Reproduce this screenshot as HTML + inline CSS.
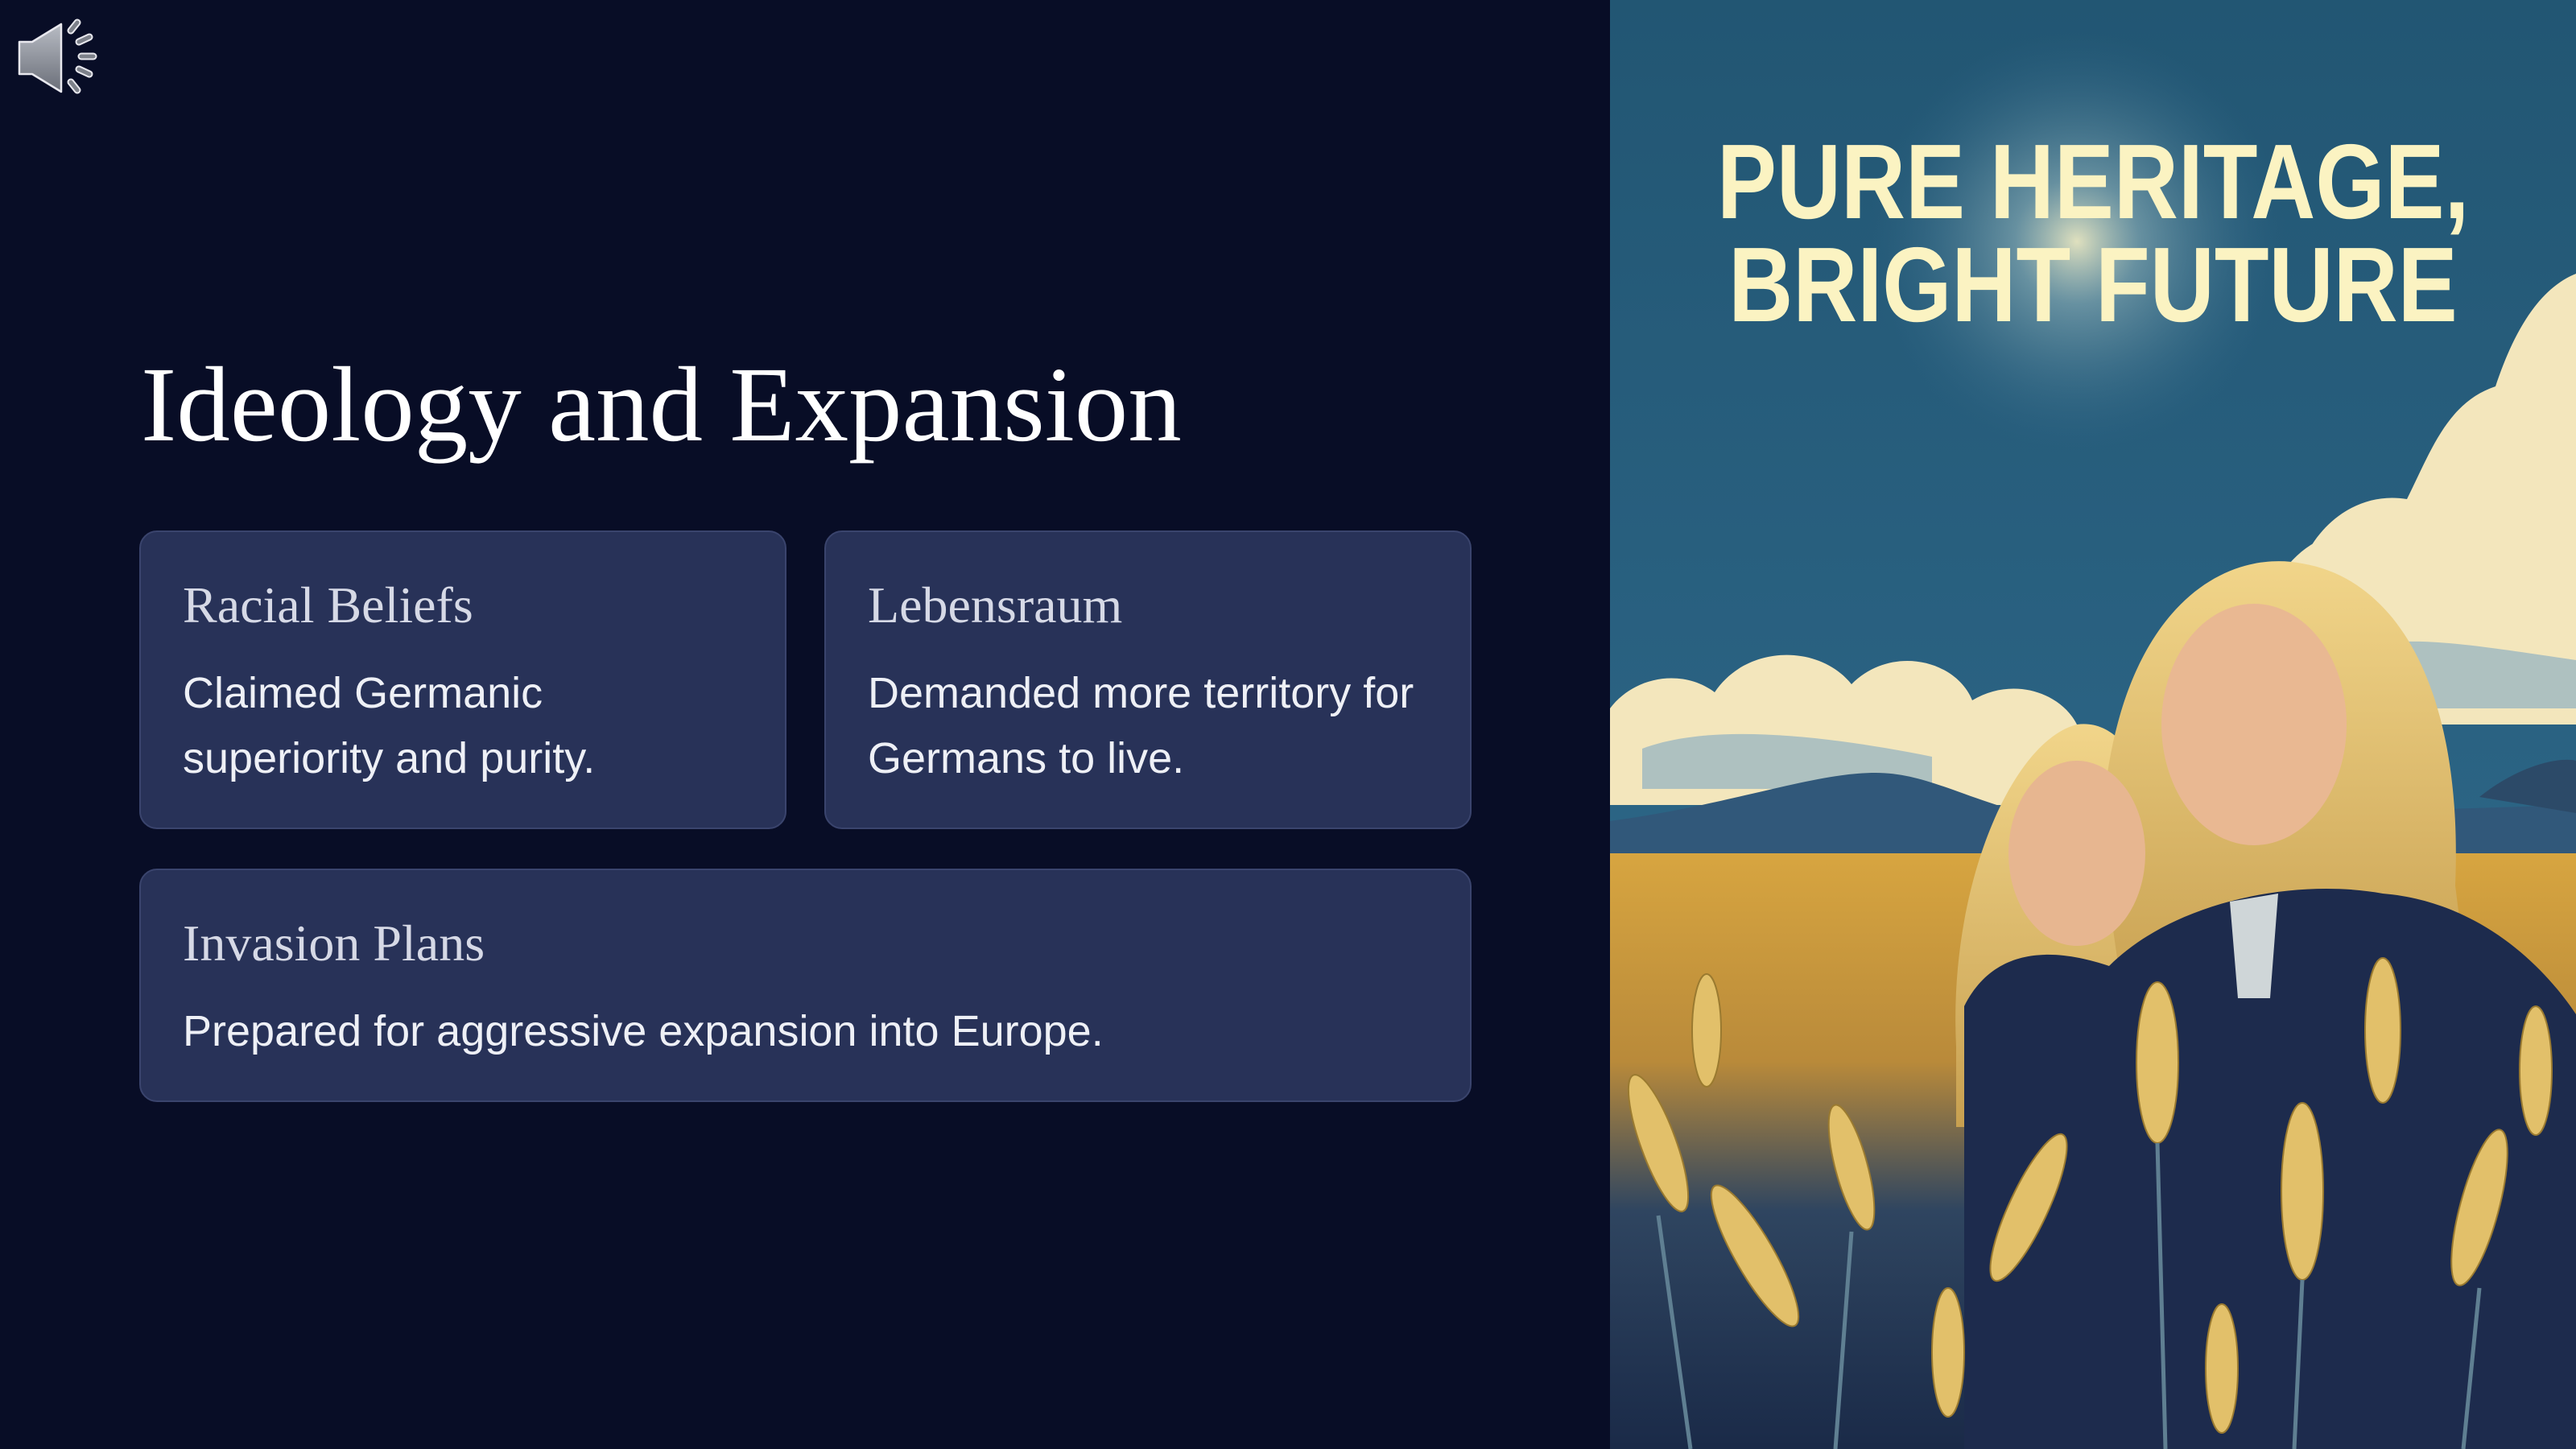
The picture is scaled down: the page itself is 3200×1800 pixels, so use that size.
<!DOCTYPE html>
<html><head><meta charset="utf-8"><style>
html,body{margin:0;padding:0}
body{width:3200px;height:1800px;position:relative;overflow:hidden;background:#080d26;font-family:"Liberation Sans",sans-serif}
.title{position:absolute;left:175px;top:425px;font-family:"Liberation Serif",serif;font-size:133px;color:#fff;white-space:nowrap}
.card{position:absolute;background:#283258;border:2px solid #3a446d;border-radius:22px;box-sizing:border-box}
.card h2{position:absolute;left:52px;top:54px;margin:0;font-family:"Liberation Serif",serif;font-weight:normal;font-size:64px;color:#d6d9e6;white-space:nowrap}
.card p{position:absolute;left:52px;top:160px;margin:0;font-size:54px;line-height:81px;color:#eef0f6;white-space:nowrap}
.poster{position:absolute;left:2000px;top:0;width:1200px;height:1800px;overflow:hidden}
.ptxt{position:absolute;left:0;width:1200px;text-align:center;font-weight:bold;color:#fbf3c2;font-size:132px;white-space:nowrap;line-height:1}
</style></head><body>
<svg style="position:absolute;left:18px;top:22px" width="108" height="100" viewBox="0 0 108 100">
<defs><linearGradient id="sg" x1="0" y1="0" x2="0" y2="1"><stop offset="0" stop-color="#b8bcc4"/><stop offset="1" stop-color="#6a6e78"/></linearGradient></defs>
<path d="M6 30 H22 L58 8 V92 L22 70 H6 Z" fill="url(#sg)" stroke="#e8e8ee" stroke-width="2.5" stroke-linejoin="round"/>
<g stroke="#e8e8ee" stroke-width="9" stroke-linecap="round"><line x1="70" y1="16" x2="78" y2="6"/><line x1="80" y1="30" x2="93" y2="24"/><line x1="83" y1="48" x2="98" y2="48"/><line x1="80" y1="64" x2="93" y2="70"/><line x1="70" y1="80" x2="78" y2="90"/></g>
<g stroke="#7d818a" stroke-width="5" stroke-linecap="round"><line x1="70" y1="16" x2="78" y2="6"/><line x1="80" y1="30" x2="93" y2="24"/><line x1="83" y1="48" x2="98" y2="48"/><line x1="80" y1="64" x2="93" y2="70"/><line x1="70" y1="80" x2="78" y2="90"/></g>
</svg>
<div class="title">Ideology and Expansion</div>
<div class="card" style="left:173px;top:659px;width:804px;height:371px"><h2>Racial Beliefs</h2><p>Claimed Germanic<br>superiority and purity.</p></div>
<div class="card" style="left:1024px;top:659px;width:804px;height:371px"><h2>Lebensraum</h2><p>Demanded more territory for<br>Germans to live.</p></div>
<div class="card" style="left:173px;top:1079px;width:1655px;height:290px"><h2>Invasion Plans</h2><p>Prepared for aggressive expansion into Europe.</p></div>
<div class="poster">
<svg width="1200" height="1800" viewBox="0 0 1200 1800">
<defs>
<linearGradient id="sky" x1="0" y1="0" x2="0" y2="1"><stop offset="0" stop-color="#225673"/><stop offset="0.5" stop-color="#2a6282"/><stop offset="1" stop-color="#33708f"/></linearGradient>
<radialGradient id="glow" cx="0.5" cy="0.5" r="0.5"><stop offset="0" stop-color="#f4efc6" stop-opacity="0.9"/><stop offset="0.3" stop-color="#a8c6c8" stop-opacity="0.5"/><stop offset="1" stop-color="#3a7090" stop-opacity="0"/></radialGradient>
<linearGradient id="field" x1="0" y1="0" x2="0" y2="1"><stop offset="0" stop-color="#d7a540"/><stop offset="0.35" stop-color="#b98a3a"/><stop offset="0.6" stop-color="#2f4560"/><stop offset="1" stop-color="#1a2a48"/></linearGradient>
<linearGradient id="hair" x1="0" y1="0" x2="0" y2="1"><stop offset="0" stop-color="#f1d58a"/><stop offset="1" stop-color="#c8a050"/></linearGradient>
</defs>
<rect width="1200" height="1800" fill="url(#sky)"/>
<circle cx="580" cy="300" r="260" fill="url(#glow)"/>
<g fill="#f3e6bc">
<path d="M1200 340 C1150 360 1120 420 1100 480 C1040 500 1020 560 990 620 C930 610 880 650 860 700 L1200 700 Z"/>
<path d="M830 720 C870 650 960 640 1010 690 C1060 660 1150 680 1200 700 L1200 900 L830 900 Z"/>
<path d="M0 880 C30 840 90 830 130 860 C170 800 260 800 300 850 C350 800 430 820 450 870 C500 840 560 860 580 900 L580 1000 L0 1000 Z"/>
</g>
<g fill="#9cb8c0" opacity="0.8"><path d="M900 820 C960 780 1060 800 1200 820 L1200 880 L900 880 Z"/><path d="M40 930 C120 900 250 910 400 940 L400 980 L40 980 Z"/></g>
<path d="M0 1060 L0 1020 C150 1000 250 960 330 960 C400 960 450 1000 560 1020 L1200 1000 L1200 1080 Z" fill="#31587a"/>
<path d="M1080 990 C1130 950 1180 940 1200 945 L1200 1010 Z" fill="#2c4a68"/>
<rect x="0" y="1060" width="1200" height="740" fill="url(#field)"/>
<path d="M430 1300 C420 1100 500 920 580 900 C650 890 700 1000 690 1200 L720 1400 L430 1400 Z" fill="url(#hair)"/>
<path d="M610 1050 C620 760 760 680 860 700 C980 720 1060 860 1050 1100 L1070 1260 L640 1260 Z" fill="url(#hair)"/>
<ellipse cx="580" cy="1060" rx="85" ry="115" fill="#e7b690"/>
<ellipse cx="800" cy="900" rx="115" ry="150" fill="#e9b892"/>
<path d="M440 1250 C480 1170 560 1180 620 1200 C700 1120 850 1090 960 1110 C1080 1120 1160 1200 1200 1260 L1200 1800 L440 1800 Z" fill="#1d2b4d"/>
<path d="M770 1120 L830 1110 L820 1240 L780 1240 Z" fill="#cfd6d8"/>
<g fill="#e2c06a" stroke="#9a7a30" stroke-width="2">
<ellipse cx="60" cy="1420" rx="22" ry="90" transform="rotate(-20 60 1420)"/>
<ellipse cx="180" cy="1560" rx="24" ry="100" transform="rotate(-30 180 1560)"/>
<ellipse cx="300" cy="1450" rx="20" ry="80" transform="rotate(-15 300 1450)"/>
<ellipse cx="120" cy="1280" rx="18" ry="70"/>
<ellipse cx="520" cy="1500" rx="24" ry="100" transform="rotate(25 520 1500)"/>
<ellipse cx="680" cy="1320" rx="26" ry="100"/>
<ellipse cx="860" cy="1480" rx="26" ry="110"/>
<ellipse cx="960" cy="1280" rx="22" ry="90"/>
<ellipse cx="1080" cy="1500" rx="24" ry="100" transform="rotate(15 1080 1500)"/>
<ellipse cx="1150" cy="1330" rx="20" ry="80"/>
<ellipse cx="420" cy="1680" rx="20" ry="80"/>
<ellipse cx="760" cy="1700" rx="20" ry="80"/>
</g>
<g stroke="#5f7f92" stroke-width="5" fill="none"><path d="M300 1530 L280 1800"/><path d="M680 1420 L690 1800"/><path d="M860 1590 L850 1800"/><path d="M1080 1600 L1060 1800"/><path d="M60 1510 L100 1800"/></g>
</svg>
<div class="ptxt" style="top:160px"><span style="display:inline-block;transform:scaleX(0.84)">PURE HERITAGE,</span></div>
<div class="ptxt" style="top:288px"><span style="display:inline-block;transform:scaleX(0.84)">BRIGHT FUTURE</span></div>
</div>
</body></html>
